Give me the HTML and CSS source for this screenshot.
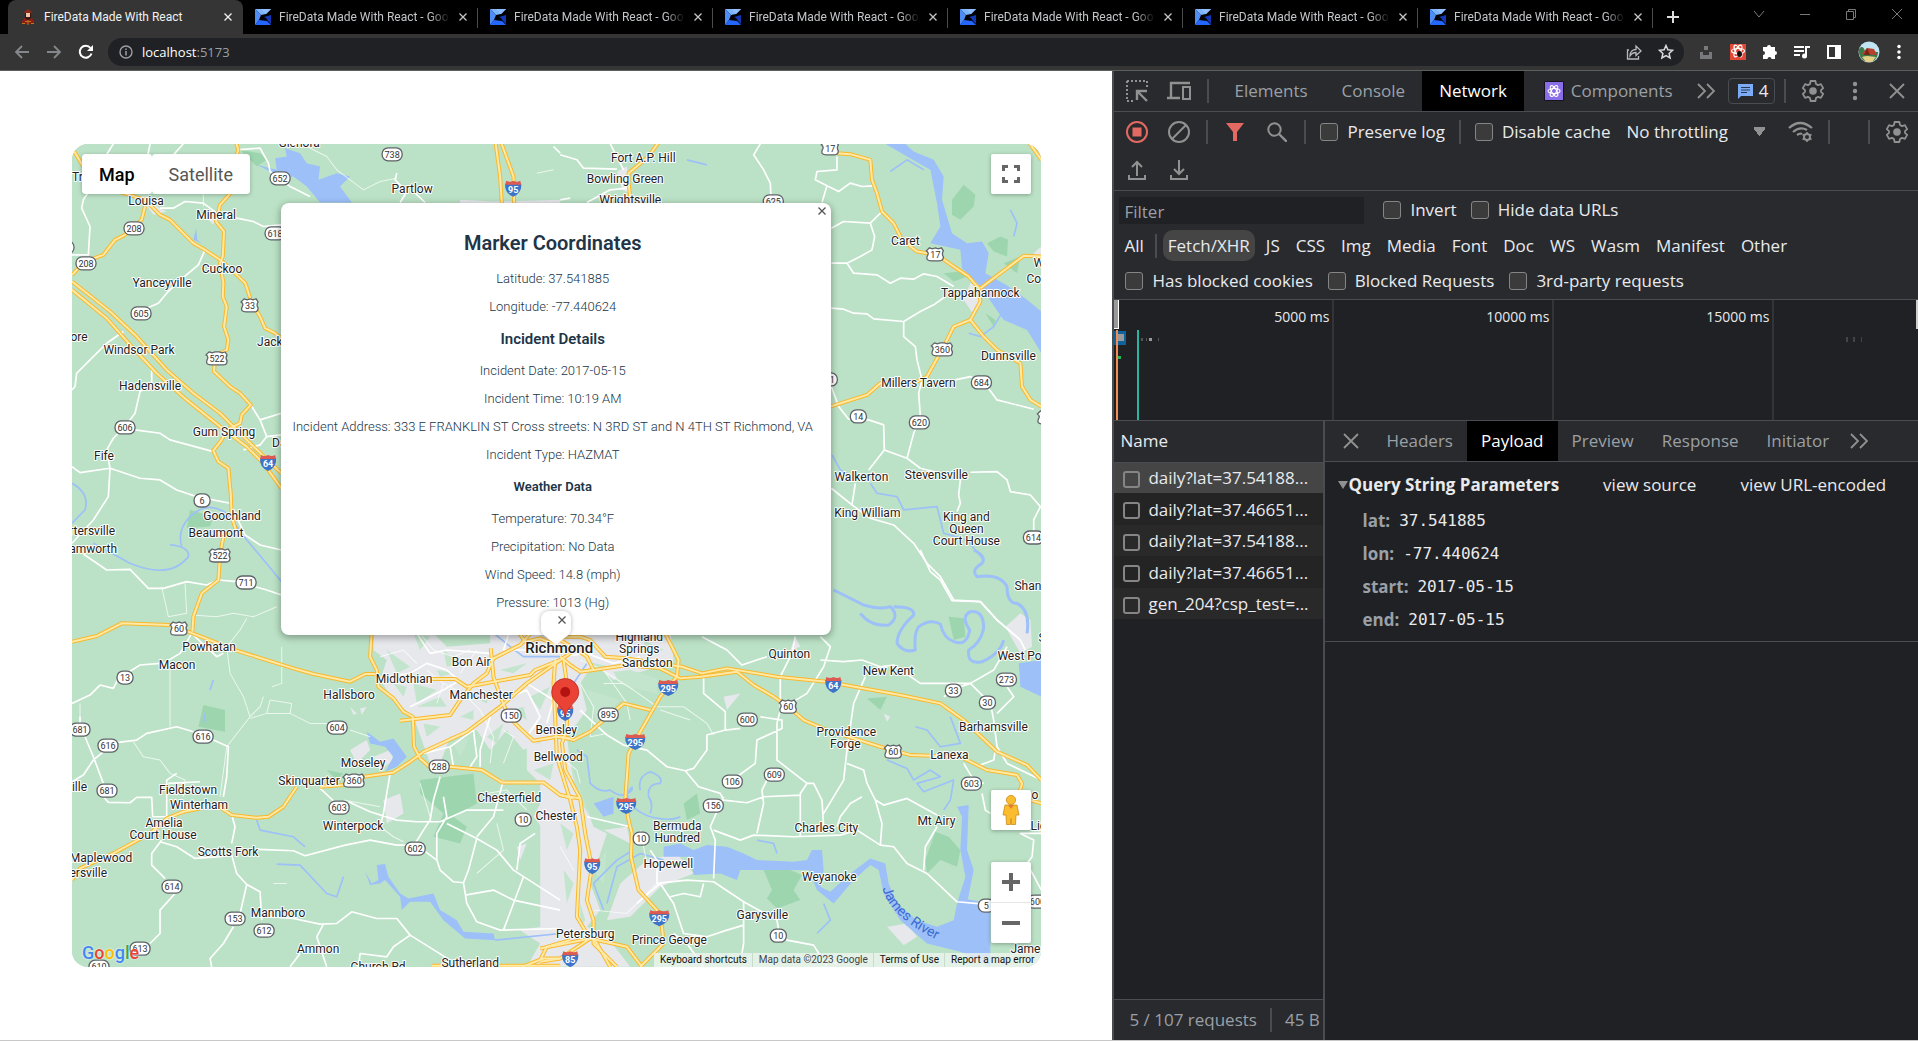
FILE: index.html
```html
<!DOCTYPE html>
<html lang="en">
<head>
<meta charset="utf-8">
<title>FireData Made With React</title>
<link rel="stylesheet" href="styles.css">
</head>
<body>
<svg class="defs" width="0" height="0" aria-hidden="true">
  <symbol id="i-g" viewBox="0 0 16 16"><path fill="#7db4ff" d="M0 0h16l-5 5-5 1z"/><path fill="#4d8df5" d="M0 0l6 6-2 5-4 5z"/><path fill="#8fbfff" d="M6 0h10l-5 5z"/><path fill="#1238b8" d="M9 8l7-2v9l-3-3-2-3z"/><path fill="#2367ff" d="M0 16l4-5 8 1 4 4z"/></symbol>
  <symbol id="i-x" viewBox="0 0 10 10"><path d="M1.5 1.5l7 7M8.500 1.500l-7 7" fill="none" stroke="currentColor" stroke-width="1.300"/></symbol>
  <symbol id="i-xl" viewBox="0 0 16 16"><path d="M1 1l14 14M15 1L1 15" fill="none" stroke="currentColor" stroke-width="1.800"/></symbol>
  <symbol id="i-more" viewBox="0 0 18 16"><path d="M1 1l7 7-7 7M10 1l7 7-7 7" fill="none" stroke="currentColor" stroke-width="1.800"/></symbol>
  <symbol id="i-dots" viewBox="0 0 6 20"><g fill="currentColor"><circle cx="3" cy="3" r="2.200"/><circle cx="3" cy="10" r="2.200"/><circle cx="3" cy="17" r="2.200"/></g></symbol>
  <symbol id="i-gear" viewBox="0 0 24 24"><path d="M9.600 2h4.800l.6 3 2 1.100 2.900-1 2.300 4-2.200 2v1.800l2.200 2-2.300 4-2.900-1-2 1.100-.6 3H9.600L9 19l-2-1.100-2.900 1-2.300-4 2.200-2v-1.800l-2.200-2 2.300-4 2.900 1L9 5z" fill="none" stroke="currentColor" stroke-width="1.800" stroke-linejoin="round"/><circle cx="12" cy="12" r="3.800" fill="currentColor"/></symbol>
</svg>

<header class="browser">
  <div class="tabstrip">
    <div class="tab active">
      <svg class="fav" viewBox="0 0 16 16"><path fill="#8a2a1a" d="M8 0l3 2 1 2H4l1-2z"/><path fill="#f0c8a8" d="M6 4h4v4H6z"/><path fill="#3a0f0c" d="M5 4h1v4l2 1 2-1V4h1v5l-3 2-3-2z"/><path fill="#8e1d14" d="M4 9l4 2 4-2 2 3v3H2v-3z"/><path stroke="#b8791f" d="M2 14.500h3M11 14.500h3M8 11v5M5 12.500h6"/></svg>
      <span class="title">FireData Made With React</span>
      <button class="tab-x" aria-label="Close tab"><svg><use href="#i-x"/></svg></button>
    </div>
    <div class="tab"><svg class="fav"><use href="#i-g"/></svg><span class="title">FireData Made With React - Goo</span><button class="tab-x" aria-label="Close tab"><svg><use href="#i-x"/></svg></button></div>
    <div class="tab"><svg class="fav"><use href="#i-g"/></svg><span class="title">FireData Made With React - Goo</span><button class="tab-x" aria-label="Close tab"><svg><use href="#i-x"/></svg></button></div>
    <div class="tab"><svg class="fav"><use href="#i-g"/></svg><span class="title">FireData Made With React - Goo</span><button class="tab-x" aria-label="Close tab"><svg><use href="#i-x"/></svg></button></div>
    <div class="tab"><svg class="fav"><use href="#i-g"/></svg><span class="title">FireData Made With React - Goo</span><button class="tab-x" aria-label="Close tab"><svg><use href="#i-x"/></svg></button></div>
    <div class="tab"><svg class="fav"><use href="#i-g"/></svg><span class="title">FireData Made With React - Goo</span><button class="tab-x" aria-label="Close tab"><svg><use href="#i-x"/></svg></button></div>
    <div class="tab"><svg class="fav"><use href="#i-g"/></svg><span class="title">FireData Made With React - Goo</span><button class="tab-x" aria-label="Close tab"><svg><use href="#i-x"/></svg></button></div>
    <button class="newtab" aria-label="New tab"><svg width="12" height="12" viewBox="0 0 12 12"><path d="M6 0v12M0 6h12" stroke="#ddd" stroke-width="2"/></svg></button>
    <div class="winctl">
      <button aria-label="Search tabs"><svg width="12" height="12" viewBox="0 0 12 12"><path d="M1 3l5 6 5-6"/></svg></button>
      <button aria-label="Minimize"><svg width="12" height="12" viewBox="0 0 12 12"><path d="M1 6.500h10"/></svg></button>
      <button aria-label="Restore"><svg width="12" height="12" viewBox="0 0 12 12"><path d="M1.500 3.500h7v8h-7zM3.500 3.500v-2h7v8h-2"/></svg></button>
      <button aria-label="Close"><svg width="12" height="12" viewBox="0 0 12 12"><path d="M1 1l10 10M11 1L1 11"/></svg></button>
    </div>
  </div>
  <div class="toolbar">
    <div class="nav">
      <button aria-label="Back"><svg width="16" height="16" viewBox="0 0 16 16"><path d="M15 8H2M8 2L2 8l6 6" fill="none" stroke="#85878a" stroke-width="1.800"/></svg></button>
      <button aria-label="Forward"><svg width="16" height="16" viewBox="0 0 16 16"><path d="M1 8h13M8 2l6 6-6 6" fill="none" stroke="#85878a" stroke-width="1.800"/></svg></button>
      <button aria-label="Reload"><svg width="16" height="16" viewBox="0 0 16 16"><path d="M13.500 9.500A6 6 0 1 1 12.500 4" fill="none" stroke="#fff" stroke-width="2"/><path d="M15 1v6H9z" fill="#fff"/></svg></button>
    </div>
    <div class="omnibox">
      <svg width="14" height="14" viewBox="0 0 14 14"><circle cx="7" cy="7" r="6" fill="none" stroke="#9aa0a6" stroke-width="1.400"/><path d="M7 6v4.500M7 3.500v1.500" stroke="#9aa0a6" stroke-width="1.500"/></svg>
      <p class="url">localhost<span>:5173</span></p>
      <button aria-label="Share"><svg width="16" height="16" viewBox="0 0 16 16"><path d="M3 6H1.500v9h11v-3M4 12c0-5 3-6.500 6-6.500V2l5 5-5 4.500V8.500C7.500 8.500 5.500 9.500 4 12z" fill="none" stroke="#b8babd" stroke-width="1.300"/></svg></button>
      <button aria-label="Bookmark"><svg width="16" height="16" viewBox="0 0 16 16"><path d="M8 1.500l1.900 4.300 4.700.5-3.500 3.100 1 4.600L8 11.600 3.900 14l1-4.600L1.400 6.300l4.700-.5z" fill="none" stroke="#d8dadd" stroke-width="1.500"/></svg></button>
    </div>
    <div class="exts">
      <button aria-label="Downloader"><svg width="16" height="16" viewBox="0 0 16 16"><path d="M2 8h3v3h6V8h3v7H2zM6 2h4v4H6z" fill="#77797c"/></svg></button>
      <button aria-label="React Developer Tools"><svg width="16" height="16" viewBox="0 0 16 16"><path fill="#e14838" d="M0 0h16v16H0z"/><g fill="none" stroke="#fff" stroke-width="1.200"><ellipse cx="8" cy="7" rx="6.500" ry="2.500"/><ellipse cx="8" cy="7" rx="6.500" ry="2.500" transform="rotate(60 8 7)"/><ellipse cx="8" cy="7" rx="6.500" ry="2.500" transform="rotate(120 8 7)"/></g><ellipse cx="9.500" cy="10" rx="2.500" ry="3" fill="#111"/></svg></button>
      <button aria-label="Extensions"><svg width="16" height="16" viewBox="0 0 16 16"><path fill="#fff" d="M5 3a2 2 0 0 1 4 0h4v4a2 2 0 0 1 0 4v4H9.500a2 2 0 0 0-4 0H1v-4a2 2 0 0 0 0-4V3z"/></svg></button>
      <button aria-label="Media"><svg width="16" height="16" viewBox="0 0 16 16"><path d="M0 3h10M0 7h10M0 11h6M12 12V3h4" fill="none" stroke="#fff" stroke-width="2"/><circle cx="10.500" cy="12" r="2.500" fill="#fff"/></svg></button>
      <button aria-label="Side panel"><svg width="16" height="16" viewBox="0 0 16 16"><path d="M2 2h12v12H2z" fill="none" stroke="#fff" stroke-width="2"/><path fill="#fff" d="M9 2h5v12H9z"/></svg></button>
      <button aria-label="Profile"><svg width="22" height="22" viewBox="0 0 22 22"><circle cx="11" cy="11" r="10.500" fill="#bfe6f2"/><path fill="#3c7a48" d="M1 8c3-4 5-1 6 2l13 1c0 6-4 10-9 10S1 17 1 11z"/><path fill="#b9402d" d="M4 13l5-6 7 1 3 6z"/><path fill="#7c2318" d="M9 7l3 7H6z"/><path fill="#e6cf86" d="M4 16c6-2 10 0 14 0l-4 5H8z"/></svg></button>
      <button aria-label="Menu"><svg width="6" height="16"><use href="#i-dots" color="#fff"/></svg></button>
    </div>
  </div>
</header>

<main class="split">
  <section class="page">
    <div class="map">
      <svg class="canvas" viewBox="72 144 969 823" preserveAspectRatio="xMidYMid slice" role="img" aria-label="Map of Richmond, Virginia">
        <defs>
          <g id="hw">
            <g transform="translate(60 140) scale(.3333)">
              <path d="M36 24L70 80L120 130L190 160L255 180L300 225L330 240L400 310L435 330L480 360L530 405L556 430L575 490L600 530L615 565L645 580L664 595"/>
              <path d="M525 0L535 30L515 90L520 150L480 195L468 245L492 275L488 350L480 370L490 430L488 470L500 500L492 560L505 600L500 630L465 650L462 695L510 740L540 760L572 795L545 825L540 850L500 870L485 900L460 932L475 965L505 985L512 1060L515 1130L530 1180L490 1190L480 1245L475 1320L425 1360L400 1430L397 1475"/>
              <path d="M255 200L245 240L195 285L165 300L130 345L75 365L36 405"/>
              <path d="M36 425L150 515L230 590L320 690L400 760L480 820L560 900L664 1000"/>
              <path d="M36 450L140 535L215 620L290 700L380 780L480 860L560 920L610 970L664 1045"/>
              <path d="M1305 0L1320 110L1325 190M1320 0L1360 110L1362 190"/>
            </g>
            <g transform="translate(560 140) scale(.3333)">
              <path d="M300 0L265 50L205 100L205 130L212 190"/>
              <path d="M830 40L870 43L930 60L935 120L950 160L965 215L1000 250L1025 300L1070 335L1130 345L1180 380L1225 410L1255 445L1260 485L1230 540L1270 590L1310 630L1380 670L1385 740L1410 780L1443 800"/>
              <path d="M1230 540L1180 560L1150 620L1100 710L1070 725L960 730L920 765L810 800"/>
              <path d="M1260 445L1390 348L1443 350M1400 0L1443 60"/>
            </g>
            <g transform="translate(60 550) scale(.3333)">
              <path d="M36 275L110 258L185 220L330 225L390 247L530 302L700 355L760 372L870 395L915 372L945 372"/>
              <path d="M935 240L930 320L950 360L955 410L1000 445L1030 485L1058 500L1062 590L1080 625L1110 652L1170 650L1265 660L1325 697L1450 697L1500 735L1540 745"/>
              <path d="M1020 512L1170 495L1200 450L1240 400L1280 370L1300 325L1380 285L1420 240M1292 295L1300 380L1325 450L1345 500L1380 535L1420 572L1490 560L1530 565"/>
              <path d="M1115 387L1185 387L1220 410L1410 375L1425 360L1500 330"/>
              <path d="M36 990L60 955L160 910L270 850L320 805L370 785L470 765L515 795L590 803L625 800L670 770L710 710M780 710L850 705M910 680L1000 667L1050 635L1090 605L1220 545L1320 470L1400 400L1500 330L1560 290"/>
              <path d="M1115 1247H1500M1385 1250L1450 1225H1500M1440 1230L1460 1190L1530 1170"/>
              <path d="M1370 240L1395 275L1440 265L1500 290"/>
            </g>
            <g transform="translate(560 550) scale(.3333)">
              <path d="M0 260H60L90 270L135 320L200 325L365 350L425 370L500 355L650 380L800 395L1020 435L1140 460L1210 510L1310 605L1400 645L1443 690"/>
              <path d="M0 270L50 300L80 320L100 360L200 345L300 355L360 385L420 380L530 365L580 405L640 440L690 475L730 510L800 540L960 590L1050 615L1200 620L1280 660L1370 675L1385 700L1370 750M1410 750L1443 760"/>
              <path d="M310 240L355 330L350 380L300 440L240 545L205 610L195 750L205 810L215 850L212 920L235 1020L290 1080L305 1130L310 1180L240 1250"/>
              <path d="M0 320L30 345L60 365L100 360M10 330L20 400L20 540L5 580L15 660L60 745L75 850L95 950L80 1050L100 1110L100 1180L170 1250"/>
              <path d="M-15 330L-20 400L-10 620L30 750L50 830L60 900L50 1100L80 1150L110 1180L150 1250"/>
              <path d="M0 560L40 570L90 545L130 510L190 460L270 480M0 735L60 745M-60 1195L90 1165L200 1190L245 1250M-60 1235L0 1225L90 1165"/>
            </g>
          </g>
        </defs>
        <rect x="72" y="144" width="969" height="823" fill="#bbe2c6"/>
        <g class="forest">
          <g transform="translate(560 140) scale(.3333)"><path d="M1175 180L1210 135L1245 165L1240 200L1200 240L1175 225zM1280 310L1320 290L1343 300L1340 350L1300 335zM1330 370L1380 350L1370 400zM1150 400L1200 395L1220 410L1180 425zM1275 520L1305 540L1300 560z"/></g>
          <g transform="translate(60 140) scale(.3333)"><path d="M540 30L600 40L620 60L590 80zM390 1110L460 1130L450 1160L380 1165z"/></g>
          <g transform="translate(60 550) scale(.3333)"><path d="M430 465L495 480L495 545L415 530zM1080 690L1240 670L1250 760L1180 800L1220 830L1200 880L1120 860L1150 790L1080 730zM800 660L850 670L830 690z"/></g>
          <g transform="translate(560 550) scale(.3333)"><path d="M610 960L680 955L725 975L700 1020L720 1050L650 1075L620 1045L635 1020zM1125 845L1165 860L1200 900L1190 950L1140 930L1100 970L1095 930zM1165 200L1210 205L1215 260L1180 270zM370 760L410 730L420 790L380 810zM920 445L980 440L960 480z"/></g>
        </g>
        <g class="urban">
          <g transform="translate(60 140) scale(.3333)"><path d="M240 170L270 170L290 200L320 215L280 225zM445 240L470 235L460 255zM1200 180L1300 185L1500 180V200H1200z"/></g>
          <g transform="translate(560 140) scale(.3333)"><path d="M170 95L200 80L210 160L185 150zM1230 430L1260 420L1260 500L1240 525L1210 480zM1420 340L1443 320V360z"/></g>
          <g transform="translate(60 550) scale(.3333)"><path d="M940 250L1110 240L1160 290L1290 280L1290 240H1500V600L1450 570L1390 600L1340 540L1290 600L1250 540L1170 560L1140 640L1110 640L1060 500L1000 450L960 390L980 330L940 300zM870 600L920 570L930 600L890 640zM940 620L990 600L1000 630L960 660zM970 750L1020 730L1030 790L980 820zM1400 590L1500 560V1120L1450 1100L1480 960L1440 900L1460 850L1420 800L1460 720L1400 660zM1380 1140L1500 1120V1250H1400L1440 1180zM1370 890L1400 880L1380 930zM870 470L890 490L880 495zM900 475L920 470L905 495z"/></g>
          <g transform="translate(560 550) scale(.3333)"><path d="M-60 240H330L340 330L260 360L160 390L100 340L60 400L80 480L20 560L30 640L70 750L100 830L140 850L90 1000L120 1080L80 1130L140 1160L210 1250H-60zM260 930L350 910L400 970L300 1010L210 1100L140 1110L180 1000zM1335 230L1380 190L1410 210L1415 290L1380 310zM490 440L540 430L500 480zM980 1130L1040 1120L1070 1160L1030 1185zM130 840L200 830L210 880zM970 490L990 500L980 515zM705 260L720 290L690 300z"/></g>
        </g>
        <g class="gaps">
          <g transform="translate(60 550) scale(.3333)"><path d="M980 300L1050 350L1010 370zM1060 400L1130 420L1070 460zM1150 300L1200 340L1160 350zM1200 500L1240 480L1240 510zM1320 360L1400 340L1360 370zM1090 520L1140 530L1100 560zM1410 440L1470 410L1440 480zM1280 560L1330 520L1310 580zM1420 660L1480 640L1470 690zM1060 250L1110 260L1080 300zM1070 470L1140 440L1160 470zM1180 580L1230 560L1200 620zM1350 480L1390 470L1400 510zM1130 360L1180 370L1140 380zM1000 400L1040 410L1030 440zM1240 440L1290 420L1280 460z"/></g>
          <g transform="translate(560 550) scale(.3333)"><path d="M60 330L150 350L100 350zM80 420L180 450L110 520zM250 270L310 300L260 310zM0 820L40 850L20 900zM10 960L40 1000L20 1060zM30 640L60 720L90 800L50 740zM100 960L140 900L130 1000zM60 1060L75 1110L60 1130z"/><path fill="#f1e6d0" d="M160 365L210 360L290 385L290 430L180 405z"/></g>
        </g>
        <g class="water">
          <g transform="translate(60 140) scale(.3333)"><path d="M590 75L650 90L645 55L680 50L675 25L720 40L740 70L780 80L775 120L830 100L870 110L840 140L875 188H780L740 140L700 110L650 120L640 100zM400 300L408 265L412 300L425 310z"/></g>
          <g transform="translate(560 140) scale(.3333)"><path d="M975 12H1035L1060 35L1120 60L1150 110L1145 180L1175 280L1220 310L1265 305L1285 340L1275 400L1310 420L1345 440L1400 480L1443 515V640L1400 570L1330 540L1260 440L1205 385L1200 330L1110 310L1140 260L1130 190L1110 90L1040 50z"/></g>
          <g transform="translate(60 550) scale(.3333)"><path d="M920 545L960 575L1000 565L1040 620L1010 650L975 665L1000 620L975 590L930 580zM950 945L975 942L985 980L1020 1030L1045 1045L1120 1030L1140 1080L1190 1110L1210 1145L1300 1150L1305 1170L1215 1165L1150 1110L1110 1055L1050 1055L1025 1080L1020 1040L975 990L960 1000L930 1005L915 965L935 1000L955 990z"/></g>
          <g transform="translate(560 550) scale(.3333)"><path d="M310 890L360 880L400 900L440 885L500 890L550 910L590 930L700 935L740 930L755 900L785 900L790 960L780 1010L810 1025L870 970L930 925L975 940L985 1000L1010 1060L1070 1110L1130 1130L1180 1110L1190 1060L1210 1045L1290 1060V1250L1200 1205L1100 1180L1020 1110L970 1030L955 960L930 945L880 990L820 1060L770 1020L745 960L640 960L540 960L530 990L480 970L400 975L390 920L310 920zM1375 340L1443 330V440L1380 410zM1190 770L1225 765L1220 900L1240 960L1220 1060H1190L1215 980L1200 900L1205 800zM100 760L160 740L160 790L130 800z"/></g>
        </g>
        <g class="streams">
          <g transform="translate(60 140) scale(.3333)"><path d="M36 1030Q90 1060 75 1110L36 1150M100 1210L210 1270Q330 1320 385 1250Q390 1220 330 1215M664 1325Q620 1270 560 1200L500 1120Q440 1080 390 1130Q350 1170 365 1220"/></g>
          <g transform="translate(560 140) scale(.3333)"><path d="M815 945L840 990L860 1000M930 1030L950 1060L1010 1070L1030 1110L1130 1100L1150 1180L1220 1200L1270 1260M1225 580L1260 590L1300 560L1330 510M1350 210L1370 250L1360 290M990 95L1040 60L1090 90M380 60L440 75"/></g>
          <g transform="translate(60 550) scale(.3333)"><path d="M1290 240L1350 290L1390 320L1500 320M450 420L460 390M430 520L435 490M590 810L600 840L700 860L735 890M650 942L720 945L800 1030L830 1040L850 980M1305 1170L1500 1150"/></g>
          <g transform="translate(560 550) scale(.3333)"><path class="fat" d="M820 120L880 150L910 165Q960 180 990 170Q1020 200 985 225Q930 230 900 190M1000 170Q1065 170 1060 195Q1010 240 1010 280Q1030 310 1065 300Q1060 250 1075 230Q1110 205 1140 222Q1150 265 1180 275Q1220 290 1228 240Q1200 200 1230 185Q1270 180 1270 235Q1260 280 1225 300Q1220 345 1265 335Q1320 310 1330 270M1240 0Q1280 20 1265 40Q1230 60 1250 80Q1320 70 1340 110Q1340 160 1370 160Q1410 180 1400 250"/><path d="M50 600L80 620L90 700Q120 730 150 720Q190 750 215 720Q220 700 200 730Q210 780 270 800Q330 815 360 800M240 720Q230 680 270 665Q310 680 300 700Q260 700 265 740Q280 760 270 790M980 630L1040 655L1060 690L1110 660L1140 680L1070 700L1090 725L1180 690L1170 750L1150 780M1065 530L1100 540L1140 590L1200 580L1170 500M130 1080L100 1000L170 930L210 905M310 930L240 910L170 950L140 1060M590 870L640 880L650 910M790 1060L810 1110L770 1150M1280 1230L1240 1180M80 340L40 400"/></g>
        </g>
        <g class="minor">
          <g transform="translate(60 550) scale(.3333)"><path d="M305 110L325 200L380 190L375 100M395 195L470 200L520 190L580 200L650 170M560 205L540 240L500 290L510 370L550 440L570 500L500 590L480 740M570 505L620 490L690 490L750 520L800 520M690 490L695 460L630 450L620 490M665 290L665 400L635 410M610 440L600 470L570 500M220 575L250 620L300 630L330 670L375 690L370 740M380 340L330 340L330 530M60 460L60 520M640 1000L680 1000M1080 250L1120 300L1180 320L1230 300M1100 360L1150 400L1130 460M960 320L1030 300L1070 340M1250 300L1200 370M1150 400L1210 430L1260 480L1300 560L1290 640M1330 540L1360 560L1330 640M1080 700L1110 800M1280 730L1340 720L1400 780M1250 970L1330 900L1310 820M960 830L1000 860L1030 875M870 540L930 560M850 750L960 770"/></g>
          <g transform="translate(560 550) scale(.3333)"><path d="M60 400L100 470L90 560L140 550M110 350L220 420L290 470L370 470L440 520L460 555M60 330L130 360L200 460L210 510M300 480L390 510M130 400L190 400M240 840L260 940M0 620L50 660L60 700M0 890L40 960M100 1080L200 1090L290 1000"/></g>
          <g transform="translate(60 140) scale(.3333)"><path d="M740 20L800 50L830 90L910 150L960 125L1010 115M430 120L430 200M1430 100L1480 90"/></g>
        </g>
        <g class="local">
          <g transform="translate(60 140) scale(.3333)"><path d="M270 12L255 90M130 60L160 12M340 45L370 12M90 150L70 180L65 205L90 260L85 345L36 345M300 205L340 205L375 185L430 190L470 220L530 235L580 245L610 260L664 255M435 330L415 375L350 430L320 460L295 490L260 505M190 575L140 610L90 660L50 700L45 740L36 750M275 690L275 730L240 755L225 820L195 860L160 895L140 930L150 985L145 1070L100 1140L36 1210M225 870L300 880L330 900L460 935M36 980L60 998L150 985L240 1015L300 1020L350 1050L410 1070L510 1090L555 1185L600 1215L664 1230M572 795L600 840L664 820M600 840L620 890L664 885M620 890L600 915L550 930M530 30L600 25L625 70L630 95L690 140L750 170M1010 100L1005 120L1040 155L1020 188M1060 155L1095 188M1480 20L1500 40"/></g>
          <g transform="translate(560 140) scale(.3333)"><path d="M0 45L50 60L70 85L170 88M190 90L150 12M200 145L150 150L80 188M0 180L30 175M600 12L580 45L610 90L630 130L632 170M830 50L830 90L770 95L765 120L800 138L785 188M800 138L835 155L870 130L905 140L940 138M965 215L930 250L850 245L813 265M930 250L943 290L935 330L900 350L860 370L813 370M860 370L880 400L950 405L990 430L1020 415L1060 418L1090 402L1130 410L1180 440M813 505L850 508L880 520L920 522L940 537L1030 545M1155 470L1120 495L1080 515L1030 545L1030 590L1065 620L1070 660L1085 720L1075 760L1080 830L1060 880L1040 955M813 740L835 800L865 838L925 840L970 855L972 930L925 990M885 1030L875 1095M972 930L1040 955L1080 985L1140 1000M1185 720L1230 710L1280 740L1310 780L1420 808M1230 997L1310 995L1340 1020L1350 1055L1410 1065L1440 1100L1420 1140L1420 1180M1200 1020L1195 1065L1200 1090L1190 1115M813 1045L875 1095L930 1135L1000 1155L1060 1210L1100 1270L1140 1310L1180 1380L1260 1385L1310 1440L1380 1500"/></g>
          <g transform="translate(60 550) scale(.3333)"><path d="M70 12L140 60L210 58L265 115L310 115L380 95L440 105L475 90L530 95M585 110L620 120L664 135M395 250L360 310L310 340M400 255L470 320L490 310M300 340L240 345L200 370M175 385L160 415L120 405L90 435L36 460M60 500L60 520M75 560L100 620L130 700M36 695L70 675L100 630L130 605M175 577L230 570L260 550L350 530L400 545M460 570L505 590L500 680L490 740M130 740L145 757L210 758L230 742L275 742L278 800L320 800L320 690L350 670M325 700L420 695M515 795L525 830L515 880M305 870L275 910V945L315 985M300 875L350 890L405 925L480 920L515 915L530 970L560 1003L540 1090M560 1003L600 1025L605 1110M520 1130L490 1180L450 1225L455 1250M345 1030L300 1080L300 1150L270 1180M595 898L700 902L735 917L855 885L930 870L1010 885L1040 885M1090 900L1130 930L1140 960L1180 995L1210 998L1220 1060L1250 1115L1320 1140L1500 1135M630 1100L700 1105L780 1122L830 1120L875 1085L950 1105L1010 1105L1050 1155L1170 1230L1170 1247M1050 1155L1000 1190L980 1220L900 1210L895 1250M790 1122L770 1160L800 1250M720 1210L690 1250M780 715L820 752M865 755L930 785L1010 810L1070 815L1140 815L1220 780L1330 780M990 670L970 790L960 830M1140 680L1120 750L1110 810L1090 840L1065 880M1150 740L1160 800L1130 850L1130 930M1160 820L1250 865L1225 960L1210 998M1250 865L1310 900L1360 960L1500 1050M1250 860L1300 800L1330 690M1370 960L1380 880L1425 850M1215 1035L1300 1020L1360 1050L1500 1080M1390 980L1360 1060L1330 1140M1090 610L1170 590L1240 540M1170 590L1180 650M1240 540L1250 620L1230 650M1290 500L1260 600L1260 650M1070 250L1110 310L1160 300L1290 310M980 380L1050 370L1100 340L1160 360L1220 410M1050 470L1150 420L1200 390M1350 240L1330 300L1420 300M1330 450L1400 420L1440 500L1400 560M1400 400L1480 450L1460 520"/></g>
          <g transform="translate(560 550) scale(.3333)"><path d="M1080 0L1110 65L1140 90L1175 152L1260 155L1310 210L1380 270L1395 300M60 480L140 555L190 585L260 600L320 650L375 662L415 710L480 730L490 750L560 758L610 740L720 735M430 380L430 430L495 485L495 540L440 555L440 600L400 655L375 662M495 540L540 535M600 500L665 510L665 535L590 570L585 640L530 680M490 740L450 830L465 870L460 985M650 520L650 630L740 700L720 730L720 860M620 690L605 720L610 760L590 850M740 700L760 700L785 750L790 830M790 790L850 690L860 600L880 460L915 380M860 640L910 660L920 700L945 750L965 820L960 885M945 750L970 765L1040 745L1130 795M905 740L870 760L840 800L830 830M460 840L540 870L580 855L700 860L840 855L890 840L960 885L1000 890L1040 940L1100 970L1190 1055L1270 1062M1130 830L1095 890L1090 960M425 260L500 300L545 345L620 320M705 260L695 310L660 380L660 480L650 520M780 260L810 290L790 350L740 430L690 460M780 330L850 335L905 330L960 350L1000 345L1080 400L1230 400L1300 360L1340 290M1150 440L1200 410L1230 400L1290 460L1300 510L1310 590L1340 640L1443 690M1340 410L1360 440L1310 490M1210 640L1240 690L1270 700M1305 600L1300 630L1260 645M1265 730L1275 780L1290 790M1443 850L1380 850L1420 870L1415 920L1400 940L1443 1020M0 320L80 310L160 340L240 320M80 800L210 830M270 900L290 930L290 1000L380 990L460 995L550 1055L550 1180L545 1210M300 1000L340 1060L370 1150L440 1160L500 1140L550 1125M330 1040L370 1030L420 1040L430 1000M550 1055L650 1110L655 1140L680 1170L760 1185L800 1250M230 1060L300 1000M340 1150L380 1180L430 1250M820 1240L860 1230M1200 1260"/></g>
        </g>
        <use href="#hw" class="casing"/>
        <use href="#hw" class="core"/>
        <path id="river" d="M882 888Q890 920 950 946" fill="none"/>
        <text class="river"><textPath href="#river">James River</textPath></text>
        <g id="shields"></g>
        <g id="places"></g>
        <path d="M565 717C563 704 551.500 703 551.500 692a13.500 13.500 0 0 1 27 0C578.500 703 567 704 565 717z" fill="#ea4335" stroke="#b8281d" stroke-width=".8"/>
        <circle cx="565" cy="692" r="5" fill="#b31412"/>
      </svg>

      <div class="maptype"><button class="on">Map</button><button>Satellite</button></div>
      <button class="ctl full" aria-label="Toggle fullscreen"><svg width="18" height="18" viewBox="0 0 18 18"><path d="M1.500 6V1.500H6M12 1.500h4.500V6M16.500 12v4.500H12M6 16.500H1.500V12" fill="none" stroke="#666" stroke-width="3"/></svg></button>
      <div class="corner">
        <button class="ctl" aria-label="Street View"><svg width="18" height="30" viewBox="0 0 18 30"><g fill="#fbbc2d" stroke="#c98a1a" stroke-width=".8"><path d="M3 10h12l2 10h-3l-.5 9.500h-4l-.5-6-.5 6h-4L4 20H1z"/><circle cx="9" cy="5" r="4.600"/></g><path d="M6 10h6l-3 4z" fill="#e37f2a"/></svg></button>
        <div class="zoom"><button aria-label="Zoom in"><svg width="18" height="18" viewBox="0 0 18 18"><path d="M9 0v18M0 9h18" stroke="#666" stroke-width="4"/></svg></button><button aria-label="Zoom out"><svg width="18" height="18" viewBox="0 0 18 18"><path d="M0 9h18" stroke="#666" stroke-width="4"/></svg></button></div>
      </div>
      <p class="logo" aria-label="Google"><span class="b">G</span><span class="r">o</span><span class="y">o</span><span class="b">g</span><span class="g">l</span><span class="r">e</span></p>
      <div class="legal"><button>Keyboard shortcuts</button><span>Map data ©2023 Google</span><a href="#terms">Terms of Use</a><a href="#report">Report a map error</a></div>

      <article class="info">
        <button class="info-x" aria-label="Close"><svg width="10" height="10"><use href="#i-x"/></svg></button>
        <h2>Marker Coordinates</h2>
        <p>Latitude: 37.541885</p>
        <p>Longitude: -77.440624</p>
        <h3>Incident Details</h3>
        <p>Incident Date: 2017-05-15</p>
        <p>Incident Time: 10:19 AM</p>
        <p>Incident Address: 333 E FRANKLIN ST Cross streets: N 3RD ST and N 4TH ST Richmond, VA</p>
        <p>Incident Type: HAZMAT</p>
        <h4>Weather Data</h4>
        <p>Temperature: 70.34°F</p>
        <p>Precipitation: No Data</p>
        <p>Wind Speed: 14.8 (mph)</p>
        <p>Pressure: 1013 (Hg)</p>
      </article>
      <div class="bubble"><button aria-label="Close"><svg width="10" height="10"><use href="#i-x"/></svg></button></div>
    </div>
  </section>

  <aside class="devtools">
    <nav class="dt-tabs">
      <button class="ico" aria-label="Inspect"><svg width="22" height="22" viewBox="0 0 22 22"><path d="M1 1h20M1 1v20M21 1v6M1 21h6" fill="none" stroke="currentColor" stroke-width="2" stroke-dasharray="2 2"/><path d="M21 21L11 11M11 20v-9h10" fill="none" stroke="currentColor" stroke-width="2.400"/></svg></button>
      <button class="ico" aria-label="Device toolbar"><svg width="24" height="20" viewBox="0 0 24 20"><path d="M23 2H4v14M0 17h13" fill="none" stroke="currentColor" stroke-width="2.400"/><path d="M16 6h7v12h-7z" fill="none" stroke="currentColor" stroke-width="2"/></svg></button>
      <i class="sep"></i>
      <button class="t">Elements</button><button class="t">Console</button><button class="t on">Network</button>
      <button class="t comp"><svg width="20" height="20" viewBox="0 0 20 20"><path fill="#8a6ee8" stroke="#17121f" d="M.5.500h19v19H.5z"/><g fill="none" stroke="#fff" stroke-width="1.200"><ellipse cx="10" cy="10" rx="6" ry="2.500"/><ellipse cx="10" cy="10" rx="6" ry="2.500" transform="rotate(60 10 10)"/><ellipse cx="10" cy="10" rx="6" ry="2.500" transform="rotate(120 10 10)"/></g></svg>Components</button>
      <button class="ico more" aria-label="More tabs"><svg width="18" height="16"><use href="#i-more"/></svg></button>
      <button class="issues"><svg width="16" height="15" viewBox="0 0 16 15"><path fill="#7cacf8" d="M1 0h15v12H4l-3 3z"/><path d="M4 3.500h9M4 6h9M4 8.500h6" stroke="#26384f"/></svg>4</button>
      <i class="sep"></i>
      <div class="end"><button class="ico" aria-label="Settings"><svg width="24" height="24"><use href="#i-gear"/></svg></button><button class="ico" aria-label="Customize"><svg width="6" height="20"><use href="#i-dots"/></svg></button><button class="ico" aria-label="Close"><svg width="16" height="16"><use href="#i-xl"/></svg></button></div>
    </nav>
    <div class="dt-tools">
      <div class="line">
        <button class="ico" aria-label="Stop recording"><svg width="22" height="22" viewBox="0 0 22 22"><circle cx="11" cy="11" r="10" fill="none" stroke="#e46962" stroke-width="2"/><path fill="#e46962" d="M6.500 6.500h9v9h-9z"/></svg></button>
        <button class="ico" aria-label="Clear"><svg width="22" height="22" viewBox="0 0 22 22"><path d="M4 18L18 4" stroke="currentColor" stroke-width="2"/><circle cx="11" cy="11" r="10" fill="none" stroke="currentColor" stroke-width="2"/></svg></button>
        <i class="sep"></i>
        <button class="ico" aria-label="Filter"><svg width="18" height="18" viewBox="0 0 18 18"><path fill="#e46962" d="M0 0h18l-7 9v9H7V9z"/></svg></button>
        <button class="ico" aria-label="Search"><svg width="20" height="20" viewBox="0 0 20 20"><circle cx="7.500" cy="7.500" r="6.200" fill="none" stroke="currentColor" stroke-width="2"/><path d="M12 12l8 8" stroke="currentColor" stroke-width="2.400"/></svg></button>
        <i class="sep"></i>
        <label><input type="checkbox">Preserve log</label>
        <i class="sep"></i>
        <label><input type="checkbox">Disable cache</label>
        <select aria-label="Throttling"><option>No throttling</option></select>
        <button class="ico wifi" aria-label="Network conditions"><svg width="26" height="22" viewBox="0 0 26 22"><path d="M1 7Q12-3 24 7M5 11q7-6 14-2M9 14q3-2 5-1" fill="none" stroke="currentColor" stroke-width="2.200"/><circle cx="19" cy="16" r="3" fill="none" stroke="currentColor" stroke-width="2"/><path d="M19 11v2M19 19v2M14.500 13.500l2 1M21.500 17.500l2 1M14.500 18.500l2-1M21.500 14.500l2-1" stroke="currentColor" stroke-width="1.600"/></svg></button>
        <i class="sep"></i><i class="sep far"></i>
        <button class="ico last" aria-label="Network settings"><svg width="24" height="24"><use href="#i-gear"/></svg></button>
      </div>
      <div class="line second">
        <button class="ico" aria-label="Import HAR"><svg width="18" height="20" viewBox="0 0 18 20"><path d="M9 16V2M4 7l5-5 5 5M1 15v4h16v-4" fill="none" stroke="currentColor" stroke-width="2"/></svg></button>
        <button class="ico" aria-label="Export HAR"><svg width="18" height="20" viewBox="0 0 18 20"><path d="M9 0v13M4 9l5 5 5-5M1 15v4h16v-4" fill="none" stroke="currentColor" stroke-width="2"/></svg></button>
      </div>
    </div>
    <div class="dt-filter">
      <div class="line f1"><input type="text" placeholder="Filter" aria-label="Filter"><label><input type="checkbox">Invert</label><label><input type="checkbox">Hide data URLs</label></div>
      <div class="line f2"><button>All</button><i class="sep"></i><button class="on">Fetch/XHR</button><button>JS</button><button>CSS</button><button>Img</button><button>Media</button><button>Font</button><button>Doc</button><button>WS</button><button>Wasm</button><button>Manifest</button><button>Other</button></div>
      <div class="line f3"><label><input type="checkbox">Has blocked cookies</label><label><input type="checkbox">Blocked Requests</label><label><input type="checkbox">3rd-party requests</label></div>
    </div>
    <div class="timeline">
      <span>5000 ms</span><span>10000 ms</span><span>15000 ms</span><span class="rest"></span>
      <svg class="marks" width="60" height="120" aria-hidden="true"><path fill="#0f639c" d="M0 31h12v14H0z"/><path fill="#999" d="M3 34h7v7H3zM0 0h4v29H0z"/><path fill="#fff" d="M4 0h1v29H0v-1h4z"/><path fill="#1db954" d="M4 56h3v3H4z"/><path fill="#555" d="M27 38h2v3h-2zM32 38h1v3h-1zM44 38h1v3h-1z"/><path fill="#999" d="M35 38h3v3h-3z"/><path fill="#f28b54" d="M2 30h2v90H2z"/><path fill="#2bb5a0" d="M23 30h2v90h-2z"/></svg>
      <svg class="marks right" width="75" height="120" aria-hidden="true"><path fill="#444" d="M3 37h2v5H3zM10 37h2v5h-2zM18 37h1v5h-1z"/><path fill="#ccc" d="M73 0h2v29h-2z"/></svg>
    </div>
    <div class="dt-body">
      <div class="requests">
        <table>
          <thead><tr><th>Name</th></tr></thead>
          <tbody>
            <tr class="sel"><td><label><input type="checkbox">daily?lat=37.54188...</label></td></tr>
            <tr><td><label><input type="checkbox">daily?lat=37.46651...</label></td></tr>
            <tr><td><label><input type="checkbox">daily?lat=37.54188...</label></td></tr>
            <tr><td><label><input type="checkbox">daily?lat=37.46651...</label></td></tr>
            <tr><td><label><input type="checkbox">gen_204?csp_test=...</label></td></tr>
          </tbody>
        </table>
        <footer><span>5 / 107 requests</span><i class="sep"></i><span>45 B</span></footer>
      </div>
      <div class="detail">
        <nav class="d-tabs"><button class="ico" aria-label="Close"><svg width="16" height="16"><use href="#i-xl"/></svg></button><button class="t">Headers</button><button class="t on">Payload</button><button class="t">Preview</button><button class="t">Response</button><button class="t">Initiator</button><button class="ico more" aria-label="More tabs"><svg width="18" height="16"><use href="#i-more"/></svg></button></nav>
        <div class="payload">
          <div class="q"><i class="tri"></i><h3>Query String Parameters</h3><button>view source</button><button>view URL-encoded</button></div>
          <dl><div><dt>lat:</dt><dd>37.541885</dd></div><div><dt>lon:</dt><dd>-77.440624</dd></div><div><dt>start:</dt><dd>2017-05-15</dd></div><div><dt>end:</dt><dd>2017-05-15</dd></div></dl>
        </div>
      </div>
    </div>
  </aside>
</main>
<script src="map.js"></script>
</body>
</html>
```
FILE: styles.css
```css
* { box-sizing: border-box; }
body { margin: 0; height: 100vh; display: flex; flex-direction: column; background: #fff; font-family: "Segoe UI", "Open Sans", "Noto Sans", sans-serif; border-bottom: 1px solid #c8c8c8; overflow: hidden; }
p, h2, h3, h4, dl, dd { margin: 0; }
button { background: none; border: 0; padding: 0; margin: 0; font: inherit; color: inherit; white-space: nowrap; }
svg { display: block; flex: none; }
.defs { position: absolute; }

/* browser frame */
.browser { flex: none; background: #353535; border-bottom: 1px solid #5c5f5e; }
.tabstrip { display: flex; height: 34px; background: #000; padding-left: 8px; }
.tab { flex: 0 1 235px; min-width: 0; display: flex; align-items: center; gap: 8px; padding: 0 8px 0 12px; color: #c4c6c9; font: 12px/16px Roboto, sans-serif; position: relative; }
.tab:not(.active)::after { content: ""; position: absolute; right: 0; top: 8px; height: 20px; width: 1px; background: #4b4b4b; }
.tab.active { background: #353535; border-radius: 8px 8px 0 0; color: #f1f1f1; }
.fav { width: 16px; height: 16px; }
.title { flex: 1; white-space: nowrap; overflow: hidden; mask-image: linear-gradient(90deg, #000 88%, transparent); }
.tab.active .title { mask-image: none; }
.tab-x svg { width: 10px; height: 10px; }
.tab-x { width: 12px; }
.newtab { margin-left: 14px; }
.winctl { margin-left: auto; display: flex; gap: 34px; padding: 0 15px 6px 0; align-items: center; }
.winctl path { fill: none; stroke: #77797b; }
.toolbar { height: 36px; display: flex; align-items: center; padding: 0 16px 0 14px; }
.nav { display: flex; gap: 16px; padding-right: 14px; }
.omnibox { flex: 1; height: 28px; border-radius: 14px; background: #202124; display: flex; align-items: center; padding: 0 10px 0 11px; gap: 16px; }
.url { flex: 1; font-size: 13px; color: #fff; margin-left: -7px; }
.url span { color: #9aa0a6; }
.exts { display: flex; align-items: center; gap: 16px; padding-left: 14px; }
.exts button { min-width: 6px; }

.split { flex: 1; min-height: 0; display: grid; grid-template-columns: minmax(0, 58fr) minmax(0, 42fr); }

/* map page */
.page { display: flex; padding: 73px 71px 73px 72px; }
.map { flex: 1; position: relative; border-radius: 16px; overflow: hidden; font-family: Roboto, sans-serif; background: #bbe2c6; }
.canvas { position: absolute; inset: 0; width: 100%; height: 100%; }
.forest path { fill: #9dd6ae; }
.urban path { fill: #e6e8ec; }
.gaps path { fill: #c4e5cd; }
.water path { fill: #9dc0f9; }
.streams path { fill: none; stroke: #9dc0f9; stroke-width: 5; stroke-linejoin: round; }
.streams .fat { stroke-width: 9; }
.local path, .minor path { fill: none; stroke: #fff; stroke-width: 5; stroke-linejoin: round; }
.minor path { stroke-width: 3; opacity: .7; }
.casing, .core { fill: none; stroke: #f9b82c; stroke-width: 12; stroke-linejoin: round; }
.core { stroke: #ffe9a6; stroke-width: 6; }
.river { font-size: 14px; fill: #3a6cd0; }
.place { font-size: 12px; fill: #222; stroke: #fff; stroke-width: 2px; stroke-linejoin: round; paint-order: stroke; text-anchor: middle; }
.place.start { text-anchor: start; }
.place.end { text-anchor: end; }
.place.city { font-size: 15px; font-weight: 500; }
.oval, .us { fill: #fff; stroke: #5f6368; stroke-width: 1.3px; }
.no { font-size: 9px; fill: #333; text-anchor: middle; }
.no.i { fill: #fff; font-weight: 700; }

.maptype { position: absolute; left: 10px; top: 10px; display: flex; height: 40px; font-size: 18px; box-shadow: 0 1px 4px rgba(0,0,0,.25); border-radius: 3px; }
.maptype button { background: #fff; padding: 0 17px; color: #565656; border-radius: 4px; }
.maptype .on { color: #000; font-weight: 500; }
.ctl, .zoom { width: 40px; background: #fff; border-radius: 2px; box-shadow: 0 1px 4px rgba(0,0,0,.3); }
.ctl { height: 40px; display: grid; place-items: center; }
.full { position: absolute; right: 10px; top: 10px; }
.corner { position: absolute; right: 10px; bottom: 24px; display: grid; gap: 32px; }
.zoom button { width: 40px; height: 40px; display: grid; place-items: center; }
.zoom button + button { border-top: 1px solid #e6e6e6; height: 41px; }
.logo { position: absolute; left: 10px; bottom: 0; font: 500 18px/28px Roboto, sans-serif; text-shadow: 0 0 2px #fff; }
.b { color: #4285f4; } .r { color: #ea4335; } .y { color: #fbbc05; } .g { color: #34a853; }
.legal { position: absolute; right: 0; bottom: 0; display: flex; height: 14px; font-size: 10px; line-height: 14px; color: #222; background: rgba(240,245,240,.75); padding: 0 2px 0 0; }
.legal > * { padding: 0 5px 0 6px; border-left: 1px solid #c7dccb; white-space: nowrap; color: #111; text-decoration: none; }
.legal span { color: #444; }
.legal :first-child { border: 0; }

.info { position: absolute; left: 50%; top: 59px; width: 550px; height: 432px; margin-left: -276px; background: #fff; border-radius: 8px; box-shadow: 0 2px 7px 1px rgba(0,0,0,.3); text-align: center; color: #213547; font-size: 13px; padding: 28px 6px 0 0; }
.info p { line-height: 16px; margin-bottom: 12px; font-weight: 300; }
.info h2 { font-size: 20px; line-height: 24px; font-weight: 600; margin-bottom: 16px; }
.info h3 { font-size: 15px; line-height: 20px; font-weight: 600; margin: 14px 0; }
.info h4 { font-size: 13px; line-height: 16px; font-weight: 600; margin: 16px 0; }
.info-x { position: absolute; right: 4px; top: 3px; color: #555; }
.bubble { position: absolute; left: 469px; top: 467px; width: 30px; height: 26px; background: #fff; border-radius: 8px; box-shadow: 0 0 4px rgba(0,0,0,.3); color: #555; }
.bubble::after { content: ""; position: absolute; left: 3px; top: 24px; border: solid transparent; border-width: 10px 12px 0; border-top-color: #fff; }
.bubble button { position: absolute; right: 4px; top: 4px; }

/* developer tools */
.devtools { display: flex; flex-direction: column; min-width: 0; min-height: 0; background: #292a2d; border-left: 2px solid #494c50; color: #e8eaed; font-size: 17px; line-height: 24px; }
.ico { color: #919191; display: grid; place-items: center; width: 42px; flex: none; }
.sep { flex: none; width: 2px; height: 24px; background: #494c50; }
.dt-tabs, .d-tabs { display: flex; align-items: center; height: 41px; border-bottom: 1px solid #494c50; flex: none; }
.dt-tabs { padding-left: 2px; }
.dt-tabs > .sep { margin-left: 7px; }
.dt-tabs > .issues + .sep { margin-left: 0; }
.t { align-self: stretch; padding: 0 17px; color: #9aa0a6; }
.t.on { background: #000; color: #fff; }
.dt-tabs .sep + .t { margin-left: 8px; }
.comp { display: flex; align-items: center; gap: 7px; padding-left: 20px; }
.more { width: 32px; }
.issues { height: 26px; border: 1px solid #494c50; border-radius: 4px; display: flex; align-items: center; gap: 6px; padding: 0 6px 0 8px; margin: 0 9px 0 6px; }
.end { display: flex; margin-left: auto; }
.dt-tools { border-bottom: 1px solid #494c50; height: 79px; padding-left: 2px; flex: none; }
.line { display: flex; align-items: center; }
.dt-tools .line { height: 40px; }
.dt-tools .second { height: 36px; }
.line label { display: flex; align-items: center; gap: 9px; white-space: nowrap; }
.line > .sep { margin: 0 6px; }
input[type=checkbox] { appearance: none; margin: 0; width: 18px; height: 18px; border: 1px solid #858585; border-radius: 3px; background: #3b3b3b; flex: none; }
.dt-tools label { margin: 0 8px; }
select { appearance: none; width: 138px; margin-left: 8px; padding: 0; border: 0; font: inherit; color: inherit; background: conic-gradient(from -39deg at 50% 100%, #919191 78deg, transparent 0) no-repeat right 0 top 7px / 11px 9px; }
.wifi { margin-left: 15px; }
.line > .far { margin-left: 32px; }
.last { margin-left: auto; }

.dt-filter { height: 109px; padding-top: 5px; border-bottom: 1px solid #494c50; flex: none; }
.f1 { height: 28px; gap: 14px; padding-left: 5px; }
.f1 > input { width: 245px; height: 27px; background: #202124; border: 0; padding: 3px 5px 0; font: inherit; color: #fff; margin-right: 5px; }
.f1 > input::placeholder { color: #9aa0a6; opacity: 1; }
.f2 { height: 33px; margin-top: 5px; padding-left: 5px; gap: 6px; }
.f2 button { padding: 0 5px; height: 31px; border-radius: 10px; }
.f2 .on { background: #454545; }
.f2 > .sep { margin: 0; }
.f3 { height: 38px; padding-left: 11px; gap: 15px; }

.timeline { display: flex; height: 121px; background: #202124; border-bottom: 1px solid #494c50; position: relative; flex: none; font-size: 14px; line-height: 18px; }
.timeline span { flex: 0 0 220px; border-right: 2px solid #333438; text-align: right; padding: 8px 3px 0 0; }
.timeline .rest { flex: 1; border: 0; }
.marks { position: absolute; left: 0; top: 0; }
.marks.right { left: auto; right: 0; }

.dt-body { flex: 1; min-height: 0; display: flex; background: #202124; }
.requests { flex: 0 0 211px; border-right: 2px solid #494c50; display: flex; flex-direction: column; }
table { width: 100%; border-collapse: collapse; }
th { height: 41px; text-align: left; font-weight: 400; background: #292a2d; padding: 0 6px; border-bottom: 1px solid #494c50; }
td { height: 31px; padding: 1px 9px 0; background: #292929; overflow: hidden; }
tr:nth-child(even) td { height: 32px; background: #242424; }
.sel td, tr.sel:nth-child(odd) td { background: #454545; }
td label { display: flex; align-items: center; gap: 8px; white-space: nowrap; }
td input[type=checkbox] { width: 17px; height: 17px; border-width: 2px; background: transparent; margin-top: 2px; }
footer { margin-top: auto; height: 41px; border-top: 1px solid #494c50; background: #292a2d; color: #9aa0a6; display: flex; align-items: center; gap: 13px; padding-left: 15px; white-space: nowrap; overflow: hidden; }
.detail { flex: 1; min-width: 0; }
.d-tabs { background: #292a2d; padding-left: 5px; }
.d-tabs .t { padding: 0 14px; }
.payload { border-bottom: 1px solid #494c50; padding: 10px 12px 5px; height: 180px; }
.q { display: flex; line-height: 26px; white-space: nowrap; align-items: center; }
.q h3 { font-size: 17px; }
.q button { margin-left: 44px; }
.tri { border: solid transparent; border-width: 8px 5px 0; border-top-color: #919191; margin-left: 1px; }
dl { padding: 6px 0 0 25px; }
dl div { display: flex; height: 33px; align-items: center; gap: 9px; }
dt { font-weight: 700; color: #9aa0a6; }
dd { font: 16px/24px "DejaVu Sans Mono", monospace; }
```
FILE: map.js
```js
const NS = 'http://www.w3.org/2000/svg';
const add = (parent, tag, attrs, text) => {
  const el = document.createElementNS(NS, tag);
  for (const k in attrs) el.setAttribute(k, attrs[k]);
  if (text) el.textContent = text;
  parent.append(el);
};

// name, x, y of the label's middle, optional anchor class
const places = [
  ['Glenora', 299, 143], ['Tr', 72, 177, 'start'], ['Louisa', 146, 201], ['Mineral', 216, 215], ['Partlow', 412, 189],
  ['Cuckoo', 222, 269], ['Yanceyville', 162, 283], ['ore', 79, 337], ['Windsor Park', 139, 350], ['Jackson', 257, 342, 'start'],
  ['Hadensville', 150, 386], ['Gum Spring', 224, 432], ['Dabneys', 272, 443, 'start'], ['Fife', 104, 456], ['Goochland', 232, 516],
  ['Beaumont', 216, 533], ['Cartersville', 115, 531, 'end'], ['Tamworth', 117, 549, 'end'], ['Fort A.P. Hill', 643, 158],
  ['Bowling Green', 625, 179], ['Wrightsville', 630, 200], ['Caret', 905, 241], ['Tappahannock', 980, 293], ['Warsaw', 1033, 263, 'start'],
  ['Court', 1026, 279, 'start'], ['Dunnsville', 1008, 356], ['Millers Tavern', 918, 383], ['Walkerton', 861, 477],
  ['Stevensville', 936, 475], ['King William', 867, 513], ['King and', 966, 517], ['Queen', 966, 529], ['Court House', 966, 541],
  ['Powhatan', 209, 647], ['Macon', 177, 665], ['Hallsboro', 349, 695], ['Midlothian', 404, 679], ['Bon Air', 471, 662],
  ['Manchester', 481, 695], ['Richmond', 559, 649, 'city'], ['Bensley', 556, 730], ['Bellwood', 558, 757], ['Chesterfield', 509, 798],
  ['Chester', 556, 816], ['Petersburg', 585, 934], ['Moseley', 363, 763], ['Skinquarter', 309, 781], ['Winterpock', 353, 826],
  ['Fieldstown', 188, 790], ['Winterham', 199, 805], ['Amelia', 164, 823], ['Court House', 163, 835], ['Scotts Fork', 228, 852],
  ['Maplewood', 101, 858], ['Jetersville', 107, 873, 'end'], ['Farmville', 87, 787, 'end'], ['Mannboro', 278, 913], ['Ammon', 318, 949],
  ['Church Rd', 378, 967], ['Sutherland', 470, 963], ['Highland', 639, 637], ['Springs', 639, 649], ['Sandston', 647, 663],
  ['Quinton', 789, 654], ['New Kent', 888, 671], ['Shanghai', 1014, 586, 'start'], ['West Point', 997, 656, 'start'],
  ['Providence', 846, 732], ['Forge', 845, 744], ['Barhamsville', 993, 727], ['Lanexa', 949, 755], ['Bermuda', 677, 826],
  ['Hundred', 677, 838], ['Charles City', 826, 828], ['Mt Airy', 936, 821], ['Hopewell', 668, 864], ['Weyanoke', 829, 877],
  ['Garysville', 762, 915], ['Prince George', 669, 940], ['Jamestown', 1010, 949, 'start'], ['Lightfoot', 1030, 826, 'start'],
  ['o', 1031, 795, 'start'], ['S', 1038, 638, 'start']
];

const state = [
  [738, 392, 155], [652, 280, 179], [208, 134, 229], [208, 86, 264], [618, 275, 234], [605, 141, 314], [606, 125, 428], [6, 202, 501],
  [625, 773, 202], [14, 858, 417], [620, 919, 423], [684, 981, 383], [614, 1033, 538], [721, 827, 380], [711, 246, 583], [13, 125, 678],
  [681, 80, 730], [616, 108, 746], [616, 203, 737], [604, 337, 728], [681, 107, 791], [603, 339, 808], [602, 415, 849], [614, 172, 887],
  [153, 235, 919], [612, 264, 931], [613, 140, 949], [610, 99, 967], [150, 511, 716], [288, 439, 767], [10, 523, 820], [895, 608, 715],
  [600, 747, 720], [106, 732, 782], [609, 774, 775], [156, 713, 806], [10, 641, 839], [10, 778, 936], [273, 1006, 680], [33, 953, 691],
  [30, 987, 703], [603, 971, 784], [5, 986, 906], [600, 1037, 902], [601, 64, 248]
];
const us = [[33, 250, 306], [522, 217, 359], [522, 220, 556], [17, 830, 149], [17, 935, 255], [360, 942, 350], [60, 179, 629],
  [360, 354, 781], [60, 788, 707], [60, 893, 752], [17, 1046, 418]];
const interstate = [[95, 513, 189], [64, 268, 463], [295, 668, 688], [295, 635, 742], [295, 626, 806], [95, 592, 866],
  [295, 659, 918], [85, 570, 959], [64, 833, 685], [95, 565, 713]];

const shields = document.getElementById('shields');
for (const [n, x, y] of state) {
  const w = n > 99 ? 20 : 16;
  add(shields, 'rect', { class: 'oval', x: x - w / 2, y: y - 7, width: w, height: 13, rx: 6 });
  add(shields, 'text', { class: 'no', x, y: y + 3 }, String(n));
}
for (const [n, x, y] of us) {
  const w = n > 99 ? 10 : 8;
  add(shields, 'path', { class: 'us', d: `M${x - w + 2} ${y - 7}l3 1 3-1h${2 * w - 16}l3 1 3-1 2 3q-2 3 0 6q0 4-4 4h${-(2 * w - 8)}q-6 0-4-5q2-3-1-5z` });
  add(shields, 'text', { class: 'no', x, y: y + 3 }, String(n));
}
for (const [n, x, y] of interstate) {
  const w = n > 99 ? 10 : 8;
  add(shields, 'path', { fill: '#3b74c9', d: `M${x - w} ${y - 5}H${x + w}Q${x + w + 1} ${y + 4} ${x} ${y + 8}Q${x - w - 1} ${y + 4} ${x - w} ${y - 5}z` });
  add(shields, 'path', { fill: '#dd5a52', d: `M${x - w + 1} ${y - 8}q${w / 2} 2 ${w - 1} 0q${w / 2} 2 ${w - 1} 0l1 4H${x - w}z` });
  add(shields, 'text', { class: 'no i', x, y: y + 4 }, String(n));
}
const labels = document.getElementById('places');
for (const [name, x, y, kind] of places) {
  add(labels, 'text', { class: 'place ' + (kind || ''), x, y: y + 4 }, name);
}
```
